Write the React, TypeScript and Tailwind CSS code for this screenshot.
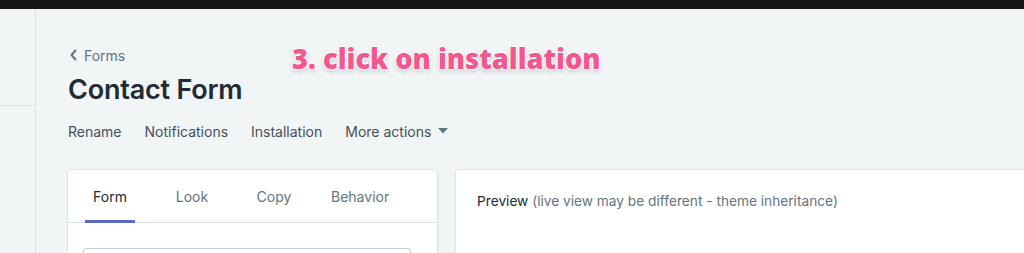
import { useState } from "react";

const ACTIONS = ["Rename", "Notifications", "Installation", "More actions"];
const TABS = ["Form", "Look", "Copy", "Behavior"];

export default function App() {
    const [tab, setTab] = useState("Form");

    return (
        <div className="relative w-[1024px] h-[253px] overflow-hidden bg-[#f2f5f6] flex flex-col font-['Inter',sans-serif]">
            {/* top bar */}
            <div className="h-[9px] bg-[#131518] shrink-0" />

            <div className="flex flex-1 min-h-0">
                {/* collapsed sidebar */}
                <aside className="w-[36px] shrink-0 border-r border-[#dfe3e6] bg-[#f2f5f6]">
                    <div className="h-[97px] border-b border-[#dfe3e6]" />
                </aside>

                <main className="flex-1 min-w-0 pl-[32px] pt-[36px]">
                    {/* breadcrumb */}
                    <a className="flex items-center gap-[6px] h-[20px] text-[14px] text-[#637381]">
                        <svg width="9" height="12" viewBox="0 0 9 12" className="ml-[1px]">
                            <path d="M6.5 1.5 2.5 6l4 4.5" fill="none" stroke="#637381" strokeWidth="2" strokeLinecap="round" strokeLinejoin="round" />
                        </svg>
                        Forms
                    </a>

                    <h1 className="mt-[9px] h-[32px] leading-[32px] text-[27px] font-semibold text-[#212b36] tracking-[-0.2px]">Contact Form</h1>

                    <div className="mt-[15px] flex items-center gap-[23px] h-[20px] text-[14px] text-[#454f5b]">
                        {ACTIONS.map((a) => (
                            <button key={a} className="flex items-center gap-[7px]">
                                {a}
                                {a === "More actions" && (
                                    <svg width="10" height="6" viewBox="0 0 10 6">
                                        <path d="M0 0h10L5 5.5z" fill="#637381" />
                                    </svg>
                                )}
                            </button>
                        ))}
                    </div>

                    <div className="mt-[29px] flex gap-[19px]">
                        {/* settings card */}
                        <section className="w-[369px] shrink-0 h-[120px] bg-white rounded-[3px] shadow-[0_0_0_1px_rgba(63,63,68,0.05),0_1px_3px_0_rgba(63,63,68,0.15)]">
                            <div className="flex pl-[1px] border-b border-[#dfe3e8] h-[53px]">
                                {TABS.map((t) => (
                                    <button
                                        key={t}
                                        onClick={() => setTab(t)}
                                        className={`px-[16px] text-[14px] ${tab === t ? "text-[#212b36]" : "text-[#637381]"}`}
                                    >
                                        <span className="relative flex h-full min-w-[50px] items-center justify-center">
                                            {t}
                                            {tab === t && <span className="absolute left-0 right-0 -bottom-px h-[3px] bg-[#5c6ac4]" />}
                                        </span>
                                    </button>
                                ))}
                            </div>
                            <div className="px-[15px] pt-[25px]">
                                <div className="h-[36px] w-[328px] border border-[#c4cdd5] rounded-[3px]" />
                            </div>
                        </section>

                        {/* preview card */}
                        <section className="flex-1 h-[120px] -mr-[20px] bg-white rounded-[3px] shadow-[0_0_0_1px_rgba(63,63,68,0.05),0_1px_3px_0_rgba(63,63,68,0.15)] pl-[21px] pt-[21px]">
                            <p className="text-[13.7px] leading-[20px] text-[#212b36]">
                                Preview <span className="text-[#637381]">(live view may be different - theme inheritance)</span>
                            </p>
                        </section>
                    </div>
                </main>
            </div>

            {/* tutorial annotation over the page */}
            <div className="absolute left-[292px] top-[40px] text-[27.3px] leading-[38px] font-extrabold text-[#f0588f] font-['Open_Sans',sans-serif] [text-shadow:0_0_2px_#fff,0_0_2px_#fff,0_0_3px_#fff,0_0_3px_#fff,0_2px_5px_rgba(0,0,0,0.25)]">
                3. click on installation
            </div>
        </div>
    );
}
